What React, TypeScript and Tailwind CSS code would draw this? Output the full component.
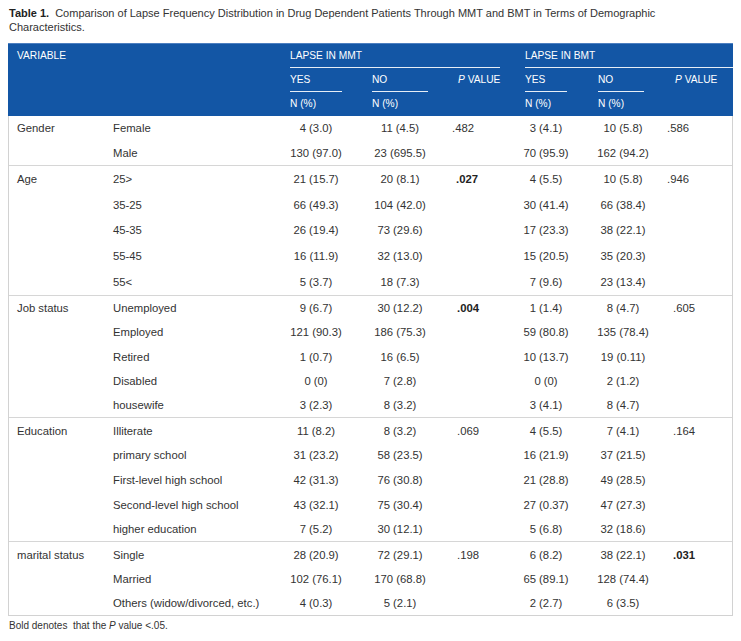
import React from "react";

type Row = {
  label: string;
  v: string[]; // mmtYes, mmtNo, mmtP, bmtYes, bmtNo, bmtP
  pb?: boolean; // mmt p bold
  qb?: boolean; // bmt p bold
};

type Group = {
  label: string;
  h: string;
  mp: string;
  bp: string;
  rows: Row[];
};

const groups: Group[] = [
  {
    label: "Gender",
    h: "h-[24.5px]",
    mp: "pl-0",
    bp: "pl-0",
    rows: [
      { label: "Female", v: ["4 (3.0)", "11 (4.5)", ".482", "3 (4.1)", "10 (5.8)", ".586"] },
      { label: "Male", v: ["130 (97.0)", "23 (695.5)", "", "70 (95.9)", "162 (94.2)", ""] },
    ],
  },
  {
    label: "Age",
    h: "h-[25.8px]",
    mp: "pl-[4px]",
    bp: "pl-0",
    rows: [
      { label: "25>", v: ["21 (15.7)", "20 (8.1)", ".027", "4 (5.5)", "10 (5.8)", ".946"], pb: true },
      { label: "35-25", v: ["66 (49.3)", "104 (42.0)", "", "30 (41.4)", "66 (38.4)", ""] },
      { label: "45-35", v: ["26 (19.4)", "73 (29.6)", "", "17 (23.3)", "38 (22.1)", ""] },
      { label: "55-45", v: ["16 (11.9)", "32 (13.0)", "", "15 (20.5)", "35 (20.3)", ""] },
      { label: "55<", v: ["5 (3.7)", "18 (7.3)", "", "7 (9.6)", "23 (13.4)", ""] },
    ],
  },
  {
    label: "Job status",
    h: "h-[24.3px]",
    mp: "pl-[5px]",
    bp: "pl-[6px]",
    rows: [
      { label: "Unemployed", v: ["9 (6.7)", "30 (12.2)", ".004", "1 (1.4)", "8 (4.7)", ".605"], pb: true },
      { label: "Employed", v: ["121 (90.3)", "186 (75.3)", "", "59 (80.8)", "135 (78.4)", ""] },
      { label: "Retired", v: ["1 (0.7)", "16 (6.5)", "", "10 (13.7)", "19 (0.11)", ""] },
      { label: "Disabled", v: ["0 (0)", "7 (2.8)", "", "0 (0)", "2 (1.2)", ""] },
      { label: "housewife", v: ["3 (2.3)", "8 (3.2)", "", "3 (4.1)", "8 (4.7)", ""] },
    ],
  },
  {
    label: "Education",
    h: "h-[24.6px]",
    mp: "pl-[5px]",
    bp: "pl-[6px]",
    rows: [
      { label: "Illiterate", v: ["11 (8.2)", "8 (3.2)", ".069", "4 (5.5)", "7 (4.1)", ".164"] },
      { label: "primary school", v: ["31 (23.2)", "58 (23.5)", "", "16 (21.9)", "37 (21.5)", ""] },
      { label: "First-level high school", v: ["42 (31.3)", "76 (30.8)", "", "21 (28.8)", "49 (28.5)", ""] },
      { label: "Second-level high school", v: ["43 (32.1)", "75 (30.4)", "", "27 (0.37)", "47 (27.3)", ""] },
      { label: "higher education", v: ["7 (5.2)", "30 (12.1)", "", "5 (6.8)", "32 (18.6)", ""] },
    ],
  },
  {
    label: "marital status",
    h: "h-[24.3px]",
    mp: "pl-[5px]",
    bp: "pl-[6px]",
    rows: [
      { label: "Single", v: ["28 (20.9)", "72 (29.1)", ".198", "6 (8.2)", "38 (22.1)", ".031"], qb: true },
      { label: "Married", v: ["102 (76.1)", "170 (68.8)", "", "65 (89.1)", "128 (74.4)", ""] },
      { label: "Others (widow/divorced, etc.)", v: ["4 (0.3)", "5 (2.1)", "", "2 (2.7)", "6 (3.5)", ""] },
    ],
  },
];

const bodyCols =
  "grid grid-cols-[104px_177px_52px_30px_56px_24px_48px_25px_42px_31px_46px_23px_65px]";
const headCols =
  "grid grid-cols-[105px_177px_52px_30px_56px_24px_48px_25px_42px_31px_46px_23px_66px] grid-rows-[24px_24px_24px]";

function Cell({ children, className = "" }: { children?: React.ReactNode; className?: string }) {
  return <div className={`flex items-center whitespace-nowrap ${className}`}>{children}</div>;
}

export default function App() {
  return (
    <div className="w-[741px] h-[641px] bg-white text-[#333] font-['Liberation_Sans',Arial,sans-serif] text-[11.3px] leading-[14px] overflow-hidden">
      <div className="pt-[6px] pl-[9px] w-[700px] text-[11px] leading-[14px]">
        <span className="font-bold text-[#222] mr-[6px]">Table 1.</span>
        Comparison of Lapse Frequency Distribution in Drug Dependent Patients Through MMT and BMT in Terms of Demographic Characteristics.
      </div>

      <div className="ml-[8px] mt-[9px] w-[725px]">
        {/* header */}
        <div className={`${headCols} bg-[#1356a5] text-white text-[10.2px] border-t border-[#4d7fc0]`}>
          <Cell className="col-start-1 row-start-1 pl-[9px]">VARIABLE</Cell>
          <Cell className="col-start-3 col-span-5 row-start-1 border-b border-white/90">LAPSE IN MMT</Cell>
          <Cell className="col-start-9 col-span-5 row-start-1 border-b border-white/90">LAPSE IN BMT</Cell>

          <Cell className="col-start-3 row-start-2 border-b border-white/90">YES</Cell>
          <Cell className="col-start-5 row-start-2 border-b border-white/90">NO</Cell>
          <Cell className="col-start-7 row-start-2 pl-[6px]">
            <i>P</i>&nbsp;VALUE
          </Cell>
          <Cell className="col-start-9 row-start-2 border-b border-white/90">YES</Cell>
          <Cell className="col-start-11 row-start-2 border-b border-white/90">NO</Cell>
          <Cell className="col-start-13 row-start-2 pl-[8px]">
            <i>P</i>&nbsp;VALUE
          </Cell>

          <Cell className="col-start-3 row-start-3">N (%)</Cell>
          <Cell className="col-start-5 row-start-3">N (%)</Cell>
          <Cell className="col-start-9 row-start-3">N (%)</Cell>
          <Cell className="col-start-11 row-start-3">N (%)</Cell>
        </div>

        {/* body */}
        <div className="border-x border-b border-[#d2d2d2]">
          {groups.map((g, gi) => (
            <div key={g.label} className={gi > 0 ? "border-t border-[#d6d6d6]" : ""}>
              {g.rows.map((r, ri) => (
                <div key={r.label} className={`${bodyCols} ${g.h}`}>
                  <Cell className="pl-[8px]">{ri === 0 ? g.label : ""}</Cell>
                  <Cell>{r.label}</Cell>
                  <Cell className="justify-center">{r.v[0]}</Cell>
                  <div />
                  <Cell className="justify-center">{r.v[1]}</Cell>
                  <div />
                  <Cell className={`${g.mp} ${r.pb ? "font-bold text-[#222]" : ""}`}>{r.v[2]}</Cell>
                  <div />
                  <Cell className="justify-center">{r.v[3]}</Cell>
                  <div />
                  <Cell className="justify-center pl-[4px]">{r.v[4]}</Cell>
                  <div />
                  <Cell className={`${g.bp} ${r.qb ? "font-bold text-[#222]" : ""}`}>{r.v[5]}</Cell>
                </div>
              ))}
            </div>
          ))}
        </div>
      </div>

      <div className="pl-[9px] mt-[4px] text-[10px] leading-[12px]">
        Bold denotes&nbsp; that the <i>P</i> value &lt;.05.
      </div>
    </div>
  );
}
